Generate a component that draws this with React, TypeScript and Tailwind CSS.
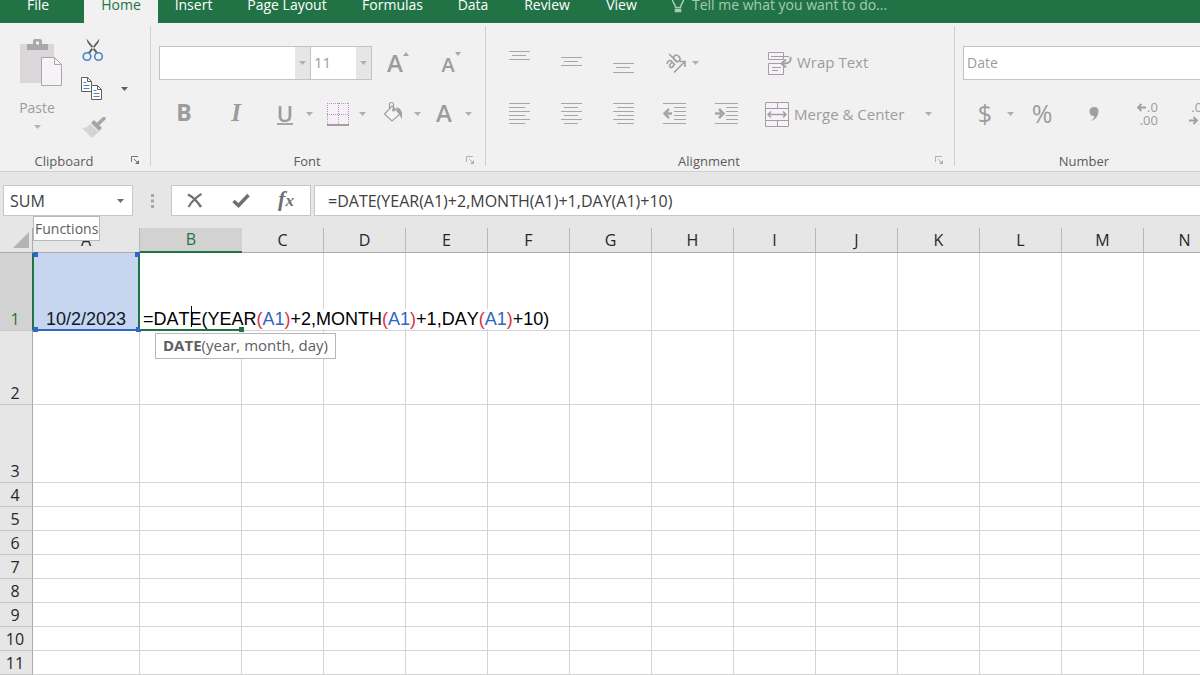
import type { ReactNode } from "react";

const TABS = [
  { name: "Insert", width: "w-[71px]" },
  { name: "Page Layout", width: "w-[116px]" },
  { name: "Formulas", width: "w-[95px]" },
  { name: "Data", width: "w-[66px]" },
  { name: "Review", width: "w-[82px]" },
  { name: "View", width: "w-[67px]" },
];

const COLUMNS = "ABCDEFGHIJKLMN".split("");

const ROWS = [
  { id: 1, height: "h-[78px]" },
  { id: 2, height: "h-[74px]" },
  { id: 3, height: "h-[78px]" },
  { id: 4, height: "h-6" },
  { id: 5, height: "h-6" },
  { id: 6, height: "h-6" },
  { id: 7, height: "h-6" },
  { id: 8, height: "h-6" },
  { id: 9, height: "h-6" },
  { id: 10, height: "h-6" },
  { id: 11, height: "h-6" },
];

const FORMULA_PARTS = [
  { text: "=DATE(YEAR", color: "text-black" },
  { text: "(", color: "text-[#d9333f]" },
  { text: "A1", color: "text-[#2f66c8]" },
  { text: ")", color: "text-[#d9333f]" },
  { text: "+2,MONTH", color: "text-black" },
  { text: "(", color: "text-[#d9333f]" },
  { text: "A1", color: "text-[#2f66c8]" },
  { text: ")", color: "text-[#d9333f]" },
  { text: "+1,DAY", color: "text-black" },
  { text: "(", color: "text-[#d9333f]" },
  { text: "A1", color: "text-[#2f66c8]" },
  { text: ")", color: "text-[#d9333f]" },
  { text: "+10)", color: "text-black" },
];

function IconButton({
  label,
  className,
  children,
}: {
  label: string;
  className: string;
  children: ReactNode;
}) {
  return (
    <button
      aria-label={label}
      className={`flex shrink-0 items-center justify-center ${className}`}
      type="button"
    >
      {children}
    </button>
  );
}

function Caret({
  label,
  className = "w-4 text-[#b0b0b0]",
}: {
  label: string;
  className?: string;
}) {
  return (
    <IconButton className={className} label={label}>
      <svg fill="currentColor" height="4" viewBox="0 0 7 4" width="7">
        <path d="M0 0h7L3.5 4z" />
      </svg>
    </IconButton>
  );
}

// Each line is [start, end, y]
function Lines({
  lines,
  width = 22,
  children,
}: {
  lines: number[][];
  width?: number;
  children?: ReactNode;
}) {
  return (
    <svg
      fill="none"
      height="26"
      stroke="#a6a6a6"
      viewBox={`0 0 ${width} 26`}
      width={width}
    >
      {lines.map(([start, end, y]) => (
        <path d={`M${start} ${y + 0.5}H${end}`} key={y} />
      ))}
      {children}
    </svg>
  );
}

function Group({
  name,
  className,
  launcherColor = "text-[#b0b0b0]",
  children,
}: {
  name: string;
  className: string;
  launcherColor?: string;
  children: ReactNode;
}) {
  return (
    <section
      aria-label={name}
      className={`flex h-[148px] shrink-0 flex-col ${className}`}
    >
      <div className="h-[127px]">{children}</div>
      <div className="grid h-[21px] grid-cols-[1fr_auto] items-center">
        <span className="text-center text-[13px] leading-5 text-[#5c5c5c]">
          {name}
        </span>
        <IconButton
          className={`mr-2 h-4 w-[14px] ${launcherColor}`}
          label={`${name} settings`}
        >
          <svg
            fill="none"
            height="9"
            stroke="currentColor"
            viewBox="0 0 9 9"
            width="9"
          >
            <path d="M.5 6V.5H7M3 3l4 4" />
            <path d="M8 4v4H4z" fill="currentColor" stroke="none" />
          </svg>
        </IconButton>
      </div>
    </section>
  );
}

function Divider() {
  return <div className="mt-[3px] h-[140px] w-px shrink-0 bg-[#d0d0d0]" />;
}

function TabBar() {
  return (
    <nav className="flex h-[23px] shrink-0 items-end bg-[#217346] text-[14px] text-white">
      <button className="mr-2 h-[38px] w-[76px] shrink-0" type="button">
        File
      </button>
      <button
        className="h-[38px] w-[74px] shrink-0 bg-[#f1f1f1] text-[#217346]"
        type="button"
      >
        Home
      </button>
      {TABS.map(({ name, width }) => (
        <button
          className={`h-[38px] shrink-0 whitespace-nowrap ${width}`}
          key={name}
          type="button"
        >
          {name}
        </button>
      ))}
      <button
        className="ml-4 flex h-[38px] shrink-0 items-center gap-[7px] whitespace-nowrap text-[#a5cbb5]"
        type="button"
      >
        <svg
          fill="none"
          height="20"
          stroke="currentColor"
          strokeWidth="1.5"
          viewBox="0 0 14 20"
          width="14"
        >
          <path d="M4.500 13.500C4.500 10 1.500 9 1.500 5.500a5.500 5 0 0 1 11 0c0 3.500-3 4.500-3 8z" />
          <path d="M4.500 15.500h5v2h-5z" fill="currentColor" />
        </svg>
        Tell me what you want to do...
      </button>
    </nav>
  );
}

function ClipboardGroup() {
  return (
    <Group
      className="w-[150px]"
      launcherColor="text-[#707070]"
      name="Clipboard"
    >
      <div className="flex">
        <button
          className="flex w-[74px] flex-col items-center pt-4 text-[14px] text-[#9c9c9c]"
          type="button"
        >
          <svg className="ml-2" height="47" viewBox="0 0 43 47" width="43">
            <path d="M0 5h34v39H0z" fill="#dad6da" />
            <path d="M7 5h6V2q0-2 2-2h5q2 0 2 2v3h6v6H7z" fill="#a9a7a9" />
            <path d="M16 2.500h3v3h-3z" fill="#f1f1f1" />
            <path
              d="M21.500 18.500h13l7 7v21h-20z"
              fill="#f7f2f8"
              stroke="#aaa7aa"
            />
            <path d="M34.500 18.500v7h7" fill="none" stroke="#aaa7aa" />
          </svg>
          <span className="mt-3 leading-5">Paste</span>
          <svg
            className="mt-[7px]"
            fill="#b5b5b5"
            height="4"
            viewBox="0 0 7 4"
            width="7"
          >
            <path d="M0 0h7L3.500 4z" />
          </svg>
        </button>
        <div className="flex flex-col pt-[7px]">
          <IconButton className="h-[39px] w-[38px]" label="Cut">
            <svg fill="none" height="24" viewBox="0 0 22 24" width="22">
              <path
                d="M4.500.5l1 4 9 11.500 1.500-1.500zM17.500.5l-1 4L7.500 16 6 14.500z"
                fill="#606060"
              />
              <circle
                cx="5"
                cy="18.500"
                r="3.800"
                stroke="#4a86c5"
                strokeWidth="1.600"
              />
              <circle
                cx="16.500"
                cy="18.500"
                r="3.800"
                stroke="#4a86c5"
                strokeWidth="1.600"
              />
            </svg>
          </IconButton>
          <div className="flex h-[39px]">
            <IconButton className="w-[36px]" label="Copy">
              <svg fill="#fff" height="24" viewBox="0 0 22 24" width="22">
                <path d="M.5.5h6l4 4v10H.5z" stroke="#606060" />
                <path d="M6.500.5v4h4" fill="none" stroke="#606060" />
                <path
                  d="M2.500 5.500h3M2.500 8.500h6M2.500 11.500h6"
                  stroke="#4a86c5"
                />
                <path d="M10.500 8.500h6l4 4v10h-10z" stroke="#606060" />
                <path d="M16.500 8.500v4h4" fill="none" stroke="#606060" />
                <path
                  d="M12.500 13.500h3M12.500 16.500h6M12.500 19.500h6"
                  stroke="#4a86c5"
                />
              </svg>
            </IconButton>
            <Caret
              className="ml-[6px] w-4 text-[#606060]"
              label="Copy options"
            />
          </div>
          <IconButton className="h-[39px] w-[40px]" label="Format Painter">
            <svg height="22" viewBox="0 0 24 22" width="24">
              <path d="M0 11c3 0 6-1 8-4l9 8c-3 2-5 4-7 6z" fill="#d6d2d6" />
              <path d="M9 6l3-3 8 8-3 3z" fill="#a6a6a6" />
              <path
                d="M15 8l7-6.500"
                stroke="#a6a6a6"
                strokeLinecap="round"
                strokeWidth="3.500"
              />
            </svg>
          </IconButton>
        </div>
      </div>
    </Group>
  );
}

function FontGroup() {
  return (
    <Group className="w-[334px]" name="Font">
      <div className="flex flex-col gap-[17px] pt-[23px] pl-2 text-[#9c9c9c]">
        <div className="flex h-[34px] items-stretch">
          <div className="flex w-[152px] border border-[#c3c3c3] bg-white">
            <input
              aria-label="Font name"
              className="min-w-0 flex-1 px-1 outline-none"
            />
            <Caret
              className="w-[15px] bg-[#e6e6e6] text-[#b0b0b0]"
              label="Font list"
            />
          </div>
          <div className="flex w-[61px] border border-l-0 border-[#c3c3c3] bg-white">
            <input
              aria-label="Font size"
              className="min-w-0 flex-1 px-[3px] pb-px text-[15px] outline-none"
              defaultValue="11"
            />
            <Caret
              className="w-[15px] bg-[#e6e6e6] text-[#b0b0b0]"
              label="Size list"
            />
          </div>
          <IconButton className="w-[52px]" label="Increase font size">
            <span className="text-[24px] leading-8 font-semibold">A</span>
            <svg
              className="mb-[18px]"
              fill="#a6a6a6"
              height="4"
              viewBox="0 0 6 4"
              width="6"
            >
              <path d="M0 4h6L3 0z" />
            </svg>
          </IconButton>
          <IconButton className="w-[54px]" label="Decrease font size">
            <span className="pt-[3px] text-[20px] leading-7 font-semibold">
              A
            </span>
            <svg
              className="mb-[18px]"
              fill="#a6a6a6"
              height="4"
              viewBox="0 0 6 4"
              width="6"
            >
              <path d="M0 0h6L3 4z" />
            </svg>
          </IconButton>
        </div>
        <div className="flex h-[34px]">
          <IconButton
            className="w-[50px] pb-[3px] text-[23px] font-bold"
            label="Bold"
          >
            B
          </IconButton>
          <IconButton
            className="w-[54px] pb-[3px] font-['Liberation_Serif',serif] text-[25px] font-bold italic"
            label="Italic"
          >
            I
          </IconButton>
          <div className="ml-[6px] flex gap-[5px]">
            <div className="flex">
              <IconButton className="w-8" label="Underline">
                <span className="border-b-2 border-[#a6a6a6] text-[22px] leading-[19px] font-semibold">
                  U
                </span>
              </IconButton>
              <Caret label="Underline options" />
            </div>
            <div className="flex">
              <IconButton className="w-8" label="Borders">
                <svg fill="none" height="23" viewBox="0 0 22 23" width="22">
                  <path d="M0 0h22v22H0z" fill="#f7f0f9" />
                  <path
                    d="M.5 0v22M11.500 0v22M21.500 0v22M0 .5h22M0 11.500h22"
                    stroke="#a99fad"
                    strokeDasharray="1 1"
                  />
                  <path d="M0 22h22" stroke="#a0a0a0" strokeWidth="2" />
                </svg>
              </IconButton>
              <Caret label="Border options" />
            </div>
            <div className="flex">
              <IconButton className="w-9 pb-[3px]" label="Fill color">
                <svg
                  fill="none"
                  height="24"
                  stroke="#a0a0a0"
                  strokeWidth="1.2"
                  viewBox="0 0 20 24"
                  width="20"
                >
                  <path d="M9 5l8 8-8 7-7.500-7z" fill="#f7f2f8" />
                  <path d="M6.500 8V3q0-1.500 2-1.500T10.500 3v5" />
                  <circle cx="10.500" cy="9" fill="#a0a0a0" r="1" />
                  <path d="M14 7q5 1 4.500 9-1-2-2-3z" fill="#a0a0a0" />
                </svg>
              </IconButton>
              <Caret
                className="w-3 text-[#b0b0b0]"
                label="Fill color options"
              />
            </div>
            <div className="flex">
              <IconButton
                className="w-8 pb-[3px] text-[24px] font-semibold"
                label="Font color"
              >
                A
              </IconButton>
              <Caret label="Font color options" />
            </div>
          </div>
        </div>
      </div>
    </Group>
  );
}

function AlignmentGroup() {
  return (
    <Group className="w-[468px]" name="Alignment">
      <div className="flex flex-col gap-[17px] pt-[23px] pl-[7px] text-[15px] whitespace-nowrap text-[#9c9c9c]">
        <div className="flex h-[34px]">
          <IconButton className="w-[52px]" label="Top align">
            <Lines
              lines={[
                [1, 22, 1],
                [4, 18, 5],
                [1, 22, 9],
              ]}
            />
          </IconButton>
          <IconButton className="w-[52px]" label="Middle align">
            <Lines
              lines={[
                [1, 22, 7],
                [4, 18, 11],
                [1, 22, 15],
              ]}
            />
          </IconButton>
          <IconButton className="w-[52px]" label="Bottom align">
            <Lines
              lines={[
                [1, 22, 13],
                [4, 18, 17],
                [1, 22, 22],
              ]}
            />
          </IconButton>
          <IconButton className="ml-[14px] w-[26px]" label="Orientation">
            <svg
              fill="none"
              height="24"
              stroke="#a0a0a0"
              strokeWidth="1.6"
              viewBox="0 0 24 24"
              width="24"
            >
              <g transform="rotate(-45 9 9)">
                <path d="M2 7.500q4-2 5 .5v6M7 10q-5-.5-5 2t5 1" />
                <path d="M10.500 2v12" />
                <ellipse cx="13" cy="10.500" rx="2.600" ry="3.500" />
              </g>
              <path d="M10 21.500L20.500 11M15.500 10.500H21V16" />
            </svg>
          </IconButton>
          <Caret className="w-3 text-[#b0b0b0]" label="Orientation options" />
          <button
            className="ml-[67px] flex shrink-0 items-center gap-[5px]"
            type="button"
          >
            <svg
              fill="none"
              height="24"
              stroke="#a39da5"
              viewBox="0 0 24 24"
              width="24"
            >
              <path d="M.5 1.500h15v7H.5zM.5 12.500h15v11H.5z" fill="#f7f2f8" />
              <path d="M3 5.500h18M4 16.500h9M4 19.500h6" />
              <path d="M22.500 6q1 7-7 6.500" strokeWidth="2" />
              <path d="M18 8.500l-4.500 4 4.500 4" strokeWidth="2" />
            </svg>
            <span className="pb-[2px] leading-5">Wrap Text</span>
          </button>
        </div>
        <div className="flex h-[34px]">
          <IconButton className="w-[52px]" label="Align left">
            <Lines
              lines={[
                [1, 22, 2],
                [1, 17, 6],
                [1, 22, 10],
                [1, 17, 14],
                [1, 22, 18],
                [1, 17, 22],
              ]}
            />
          </IconButton>
          <IconButton className="w-[52px]" label="Center">
            <Lines
              lines={[
                [1, 22, 2],
                [4, 18, 6],
                [1, 22, 10],
                [4, 18, 14],
                [1, 22, 18],
                [4, 18, 22],
              ]}
            />
          </IconButton>
          <IconButton className="w-[52px]" label="Align right">
            <Lines
              lines={[
                [1, 22, 2],
                [5, 22, 6],
                [1, 22, 10],
                [5, 22, 14],
                [1, 22, 18],
                [5, 22, 22],
              ]}
            />
          </IconButton>
          <IconButton className="w-[52px]" label="Decrease indent">
            <Lines
              lines={[
                [0, 23, 2],
                [11, 23, 6],
                [11, 23, 10],
                [11, 23, 14],
                [11, 23, 18],
                [0, 23, 22],
              ]}
              width={24}
            >
              <path d="M9 12.500H2M6 8l-4.500 4.500L6 17" strokeWidth="2.5" />
            </Lines>
          </IconButton>
          <IconButton className="w-[52px]" label="Increase indent">
            <Lines
              lines={[
                [0, 23, 2],
                [11, 23, 6],
                [11, 23, 10],
                [11, 23, 14],
                [11, 23, 18],
                [0, 23, 22],
              ]}
              width={24}
            >
              <path d="M0 12.500h8M4 8l4.500 4.500L4 17" strokeWidth="2.5" />
            </Lines>
          </IconButton>
          <button
            className="ml-3 flex shrink-0 items-center gap-[5px]"
            type="button"
          >
            <svg
              fill="none"
              height="25"
              stroke="#a39da5"
              viewBox="0 0 24 25"
              width="24"
            >
              <path d="M.5.5h23v24H.5z" fill="#f7f2f8" />
              <path d="M0 6.500h24M0 18.500h24M12.500 0v6M12.500 19v6" />
              <path
                d="M3 12.500h18M6 9.500l-3 3 3 3M18 9.500l3 3-3 3"
                strokeWidth="1.5"
              />
            </svg>
            Merge &amp; Center
          </button>
          <Caret className="ml-4 w-4 text-[#b0b0b0]" label="Merge options" />
        </div>
      </div>
    </Group>
  );
}

function Arrow({ right = false }: { right?: boolean }) {
  return (
    <svg
      fill="none"
      height="9"
      stroke="#a0a0a0"
      strokeWidth="1.8"
      viewBox="0 0 11 9"
      width="11"
    >
      <path
        d={
          right
            ? "M1 4.500h8M5.500 1L9 4.500 5.500 8"
            : "M10 4.500H2M5.500 1L2 4.500 5.500 8"
        }
      />
    </svg>
  );
}

function NumberGroup() {
  return (
    <Group className="w-[280px]" name="Number">
      <div className="flex flex-col gap-[17px] pt-[23px] pl-2 text-[#9c9c9c]">
        <select
          aria-label="Number format"
          className="h-[34px] w-[262px] appearance-none border border-[#c3c3c3] bg-white px-[3px] pb-px text-[14px] outline-none"
          defaultValue="Date"
        >
          <option>Date</option>
        </select>
        <div className="flex h-[34px]">
          <IconButton
            className="ml-[3px] w-[38px] pb-px text-[25px]"
            label="Currency"
          >
            $
          </IconButton>
          <Caret className="w-3 text-[#b0b0b0]" label="Currency options" />
          <IconButton className="w-[52px] pb-px text-[25px]" label="Percent">
            %
          </IconButton>
          <IconButton className="w-[52px]" label="Comma style">
            <svg fill="#a0a0a0" height="14" viewBox="0 0 10 14" width="10">
              <path d="M1 14c3-1 4-3 4-5A4.500 4.500 0 1 1 9.500 4c0 5-3 9-8.500 10z" />
            </svg>
          </IconButton>
          <IconButton className="w-[54px]" label="Increase decimal">
            <span className="flex flex-col items-end text-[13px] leading-[13px]">
              <span className="flex items-center">
                <Arrow />
                .0
              </span>
              <span>.00</span>
            </span>
          </IconButton>
          <IconButton className="w-[50px]" label="Decrease decimal">
            <span className="flex flex-col text-[13px] leading-[13px]">
              <span className="pl-[3px]">.00</span>
              <span className="flex items-center">
                <Arrow right />
                .0
              </span>
            </span>
          </IconButton>
        </div>
      </div>
    </Group>
  );
}

function FormulaBar() {
  return (
    <div className="flex shrink-0 pt-[13px] pb-3 pl-[3px] text-[#404040]">
      <div className="relative flex h-[31px] w-[130px] shrink-0 border border-[#c6c6c6] bg-white">
        <input
          aria-label="Name box"
          className="min-w-0 flex-1 px-[6px] text-[16px] outline-none"
          defaultValue="SUM"
        />
        <Caret className="w-6 text-[#707070]" label="Names" />
        <div
          className="absolute top-[30px] left-[29px] z-20 border border-[#b8b8b8] bg-white px-px text-[14px] leading-[23px] text-[#606060]"
          role="tooltip"
        >
          Functions
        </div>
      </div>
      <div className="flex w-[38px] shrink-0 items-center justify-center">
        <svg fill="#a6a6a6" height="14" viewBox="0 0 3 14" width="3">
          <path d="M0 0h3v3H0zM0 5.500h3v3H0zM0 11h3v3H0z" />
        </svg>
      </div>
      <div className="flex w-[140px] shrink-0 border border-[#c6c6c6] bg-white">
        <IconButton className="w-[46px]" label="Cancel">
          <svg
            fill="none"
            height="15"
            stroke="#707070"
            viewBox="0 0 16 15"
            width="16"
          >
            <path d="M1 1.500Q8 5 14 14" strokeWidth="2.5" />
            <path d="M14.500 1Q7 5 1.500 14" strokeWidth="2" />
          </svg>
        </IconButton>
        <IconButton className="w-[46px]" label="Enter">
          <svg
            fill="none"
            height="15"
            stroke="#707070"
            viewBox="0 0 18 15"
            width="18"
          >
            <path d="M1.500 8l5 4.500L16.500 2" strokeWidth="3.5" />
          </svg>
        </IconButton>
        <IconButton
          className="w-[44px] pb-1 font-['Liberation_Serif',serif] font-bold text-[#707070] italic"
          label="Insert function"
        >
          <span className="text-[22px] leading-6">f</span>
          <span className="pt-[5px] text-[17px] leading-4">x</span>
        </IconButton>
      </div>
      <input
        aria-label="Formula"
        className="ml-[3px] h-[31px] min-w-0 flex-1 border border-r-0 border-[#c6c6c6] bg-white px-[13px] text-[16px] outline-none"
        defaultValue="=DATE(YEAR(A1)+2,MONTH(A1)+1,DAY(A1)+10)"
      />
    </div>
  );
}

function Handle({ className }: { className: string }) {
  return <i className={`absolute z-10 size-[5px] ${className}`} />;
}

function ReferencedCell() {
  return (
    <td className="relative border-r-2 border-b-2 border-l border-r-[#217346] border-b-[#2f66c8] border-l-[#217346] bg-[#c6d6f0] text-center align-bottom text-[18px] leading-5 text-[#101828]">
      10/2/2023
      <Handle className="-top-px -left-px bg-[#2f66c8]" />
      <Handle className="-top-px -right-[2px] bg-[#2f66c8]" />
      <Handle className="-bottom-[3px] -left-px bg-[#2f66c8]" />
      <Handle className="-right-[3px] -bottom-[3px] bg-[#2f66c8]" />
    </td>
  );
}

function EditingCell() {
  return (
    <td className="relative border-b-2 border-b-[#217346] align-bottom text-[18px] leading-5">
      <div className="relative z-10 w-max bg-white pl-[3px] whitespace-nowrap [font-kerning:none]">
        {FORMULA_PARTS.map(({ text, color }, index) => (
          <span className={color} key={index}>
            {text}
          </span>
        ))}
        <i className="absolute -top-[3px] left-[51px] h-[21px] w-px bg-black" />
      </div>
      <Handle className="-right-[2px] -bottom-[3px] bg-[#217346]" />
      <div
        className="absolute top-[80px] left-[15px] z-20 border border-[#b8b8b8] bg-white px-[7px] pb-[2px] font-['Open_Sans',sans-serif] text-[15px] leading-[22px] whitespace-nowrap text-[#606060]"
        role="tooltip"
      >
        <b>DATE</b>(year, month, day)
      </div>
    </td>
  );
}

function Sheet() {
  return (
    <table className="w-[1226px] table-fixed border-separate border-spacing-0 bg-white">
      <colgroup>
        <col className="w-[33px]" />
        <col className="w-[107px]" />
        <col className="w-[102px]" />
        {COLUMNS.slice(2).map((column) => (
          <col className="w-[82px]" key={column} />
        ))}
      </colgroup>
      <thead>
        <tr className="h-[25px] bg-[#e6e6e6] font-['Open_Sans',sans-serif] text-[16px] leading-[23px] text-[#262626]">
          <th
            aria-label="Select all"
            className="border-r border-b border-[#ababab] p-0"
          >
            <svg
              className="mr-[3px] ml-auto"
              fill="#b4b4b4"
              height="16"
              viewBox="0 0 16 16"
              width="16"
            >
              <path d="M16 0v16H0z" />
            </svg>
          </th>
          {COLUMNS.map((column) => (
            <th
              className={`p-0 font-normal ${
                column === "B"
                  ? "border-b-2 border-b-[#217346] bg-[#d2d2d2] text-[#217346]"
                  : "border-r border-b border-r-[#b8b8b8] border-b-[#ababab]"
              }`}
              key={column}
              scope="col"
            >
              {column}
            </th>
          ))}
        </tr>
      </thead>
      <tbody>
        {ROWS.map(({ id, height }) => (
          <tr className={height} key={id}>
            <th
              className={`border-r border-b border-b-[#c6c6c6] p-0 pr-[2px] align-bottom font-['Open_Sans',sans-serif] text-[16px] leading-[22px] font-normal ${
                id === 1
                  ? "border-r-[#217346] bg-[#d2d2d2] text-[#217346]"
                  : "border-r-[#ababab] bg-[#e6e6e6] text-[#262626]"
              }`}
              scope="row"
            >
              {id}
            </th>
            {COLUMNS.map((column) => {
              if (id === 1 && column === "A") {
                return <ReferencedCell key={column} />;
              }
              if (id === 1 && column === "B") {
                return <EditingCell key={column} />;
              }
              return (
                <td
                  className="border-r border-b border-[#d4d4d4] p-0"
                  key={column}
                />
              );
            })}
          </tr>
        ))}
      </tbody>
    </table>
  );
}

export default function App() {
  return (
    <div className="flex h-screen flex-col overflow-hidden bg-[#e6e6e6] font-['Open_Sans',sans-serif]">
      <TabBar />
      <div className="flex shrink-0 overflow-hidden border-b border-[#d0d0d0] bg-[#f1f1f1]">
        <ClipboardGroup />
        <Divider />
        <FontGroup />
        <Divider />
        <AlignmentGroup />
        <Divider />
        <NumberGroup />
      </div>
      <FormulaBar />
      <main className="min-h-0 flex-1 overflow-hidden bg-white font-['Liberation_Sans',Arial,sans-serif]">
        <Sheet />
      </main>
    </div>
  );
}
